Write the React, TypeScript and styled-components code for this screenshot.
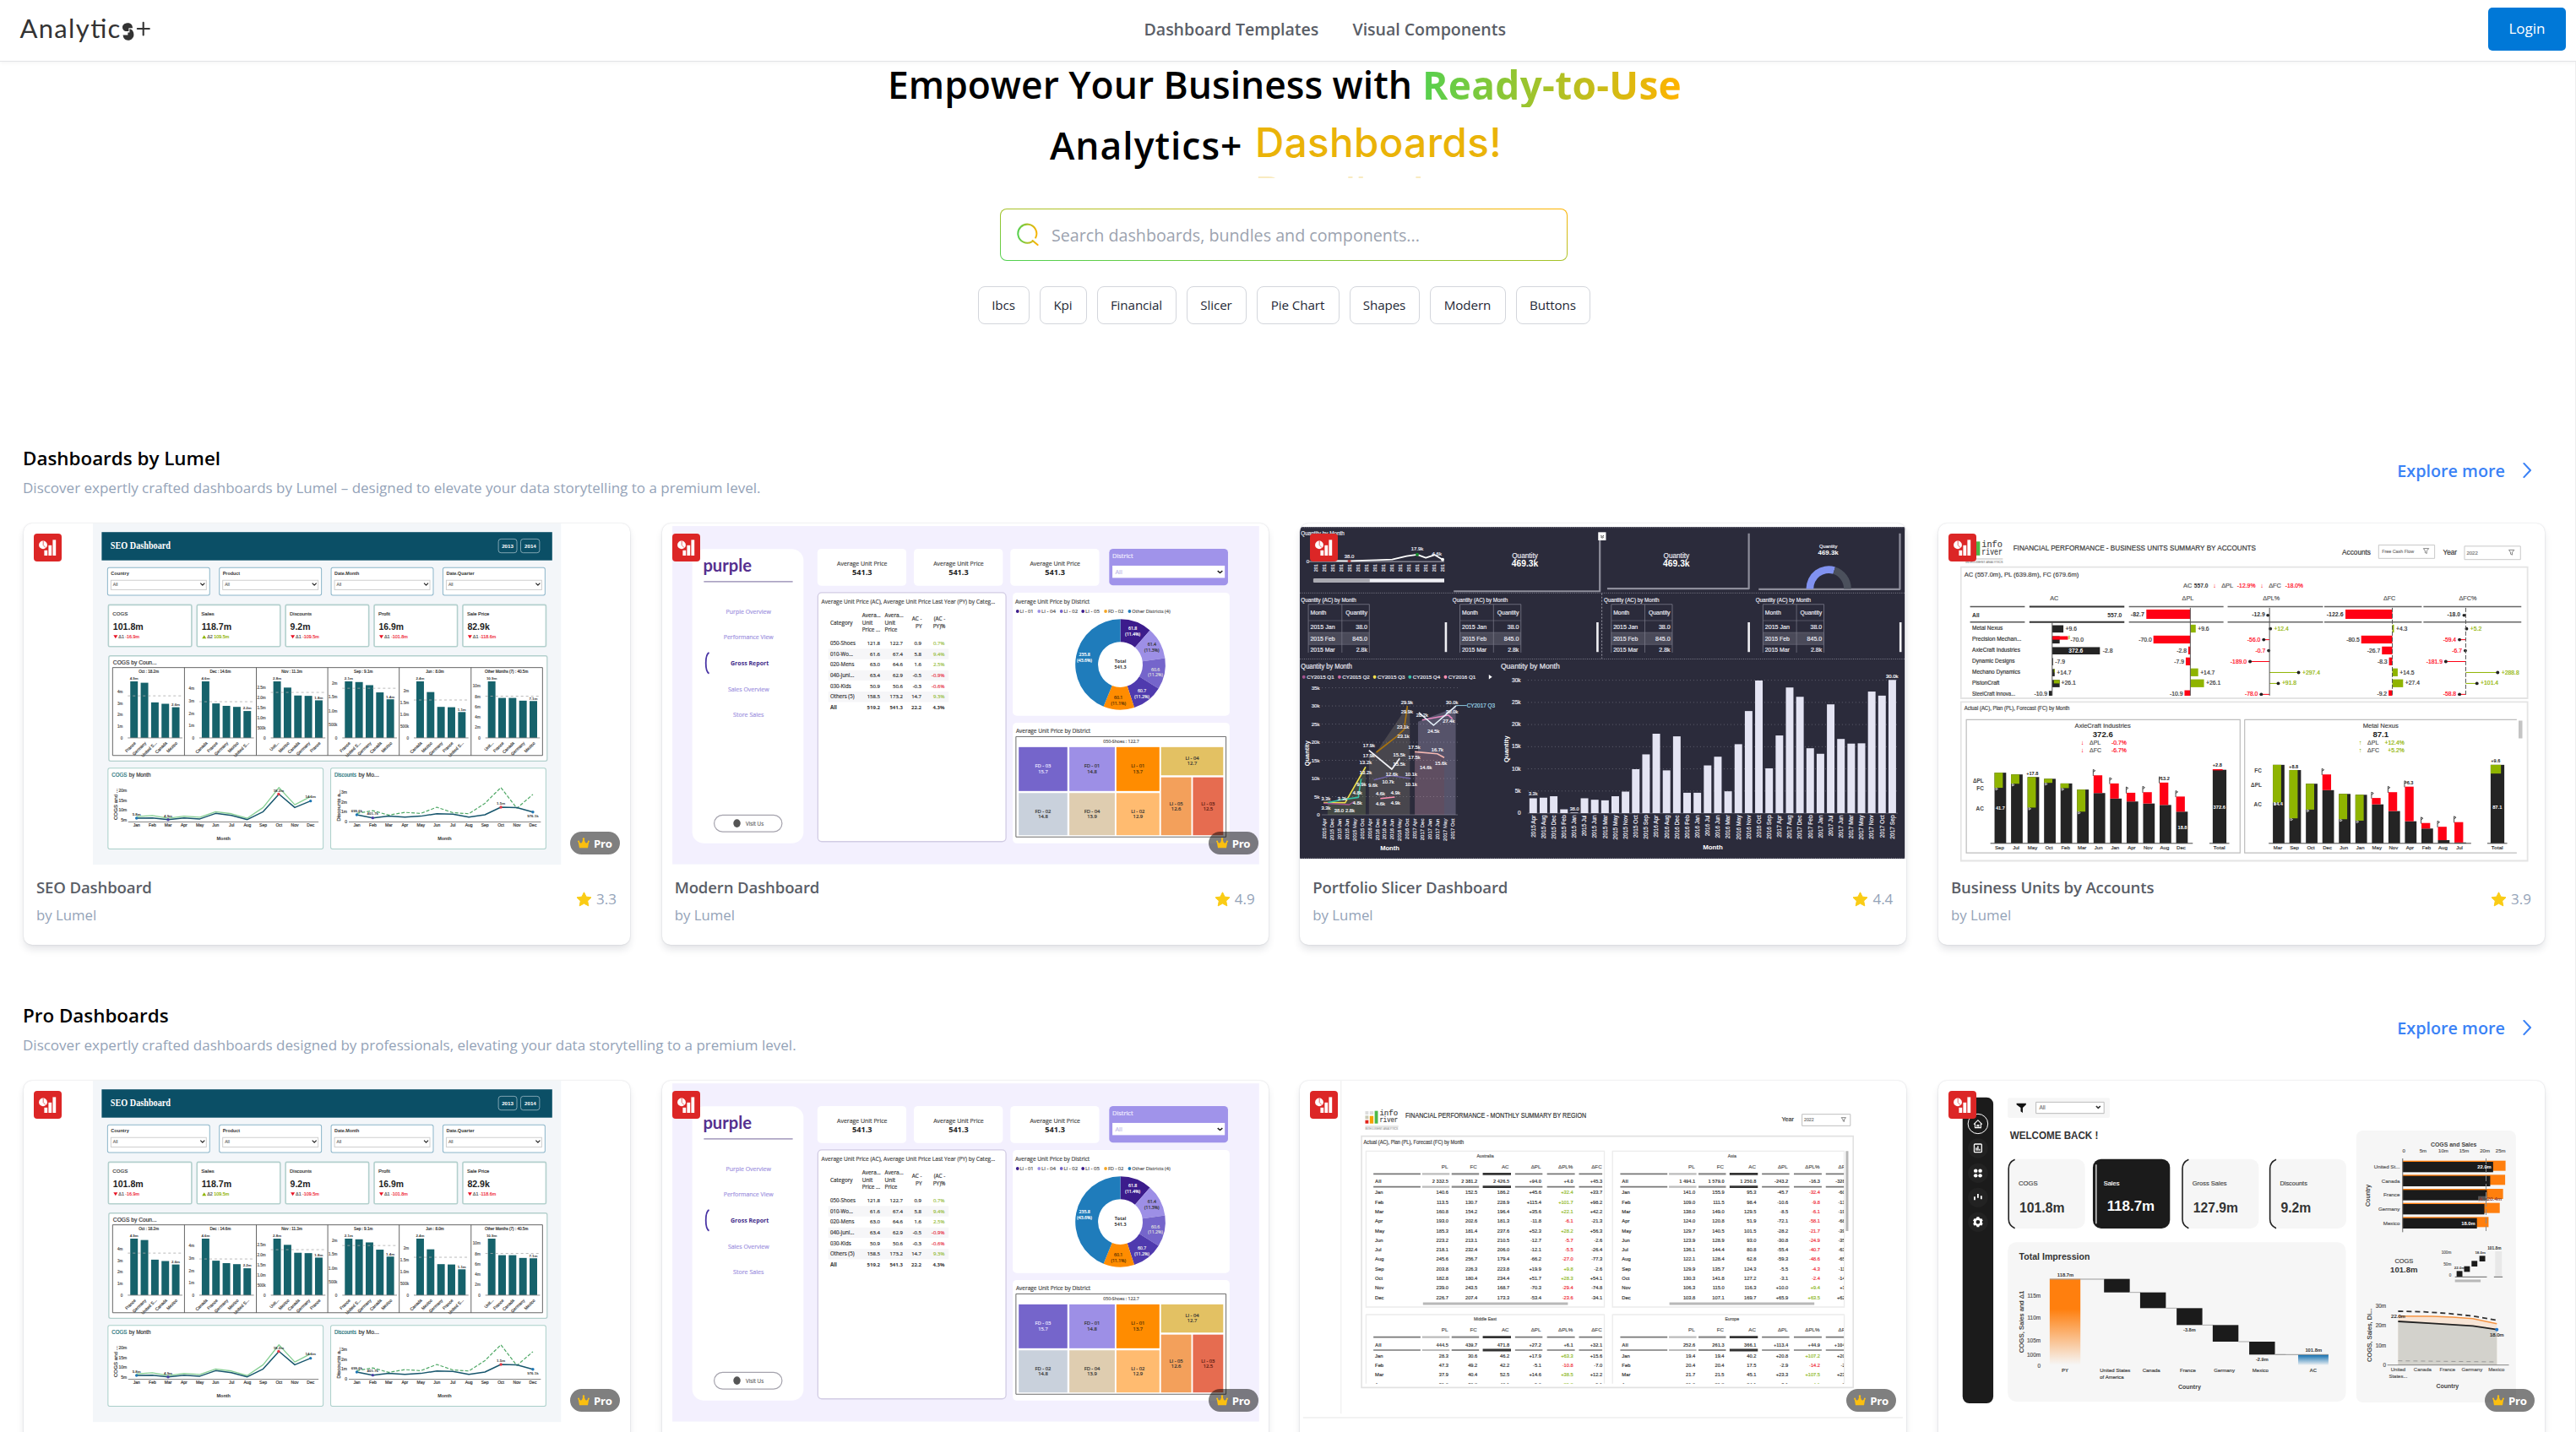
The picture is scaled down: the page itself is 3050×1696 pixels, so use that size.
import React, { createContext, useContext } from 'react';
import styled, { createGlobalStyle } from 'styled-components';

const ui = `'Open Sans', 'Noto Sans', sans-serif`;

const GlobalStyle = createGlobalStyle`
  *, *::before, *::after { box-sizing: border-box; }
  html, body { margin: 0; padding: 0; background: #fff; }
  body { font-family: ${ui}; overflow: hidden; }
  h1, h2, h3, p { margin: 0; }
`;

/* ---------- page shell ---------- */

const Page = styled.div`
  width: 3050px;
  height: 1696px;
  overflow: hidden;
  display: flex;
  flex-direction: column;
  background: #fff;
`;

const Header = styled.header`
  flex: none;
  height: 73px;
  display: grid;
  grid-template-columns: 1fr auto 1fr;
  align-items: center;
  padding: 0 12px 3px 24px;
  border-bottom: 1px solid #e2e3e6;
  background: #fff;
  box-shadow: 0 2px 4px rgba(0, 0, 0, 0.04);
`;

const Logo = styled.svg`
  display: block;
  width: 156px;
  height: 40px;
  margin-top: 3px;
  overflow: visible;
`;

const Nav = styled.nav`
  display: flex;
  gap: 42px;
  transform: translateX(39px);
`;

const NavLink = styled.a<{ $w: number }>`
  width: ${(p) => p.$w}px;
  white-space: nowrap;
  font-size: 19.6px;
  line-height: 28px;
  font-weight: 600;
  letter-spacing: -0.05px;
  color: #5a5e67;
`;

const LoginButton = styled.button`
  justify-self: end;
  width: 92px;
  height: 51px;
  border: 0;
  border-radius: 5px;
  background: #0078d7;
  color: #fff;
  font: 400 17px/24px ${ui};
  padding: 0 0 2px;
`;

const Scroll = styled.main`
  flex: 1;
  min-height: 0;
  padding-right: 9px;
  border-right: 1px solid #ededee;
`;

const Hero = styled.section`
  display: flex;
  flex-direction: column;
  align-items: center;
`;

const Headline = styled.h1`
  font-weight: 600;
  font-size: 44.4px;
  color: #000;
  display: flex;
  flex-direction: column;
  align-items: center;
  gap: 12px;
`;

const HeadRow = styled.span`
  display: flex;
  align-items: flex-start;
  white-space: nowrap;
`;

const Strong = styled.span`
  width: 305px;
  font-weight: 700;
  font-size: 46px;
  line-height: 54px;
  margin-left: 14px;
  background: linear-gradient(90deg, #56d04e, #ffb300);
  background-clip: text;
  -webkit-background-clip: text;
  color: transparent;
  letter-spacing: 0.3px;
`;

const HeadText = styled.span<{ $w: number; $drop?: number; $ls?: number }>`
  width: ${(p) => p.$w}px;
  line-height: 54px;
  letter-spacing: ${(p) => p.$ls ?? 0}px;
  padding-top: ${(p) => p.$drop ?? 0}px;
`;

const Rotator = styled.span`
  display: flex;
  flex-direction: column;
  width: 312px;
  height: 72px;
  padding: 1px 0 0 1px;
  overflow: hidden;
`;

const RotatingWord = styled.span<{ $faded?: boolean }>`
  flex: none;
  font: 500 47.5px/58px Inter, Roboto, sans-serif;
  letter-spacing: 0.4px;
  color: #eab308;
  opacity: ${(p) => (p.$faded ? 0.25 : 1)};
`;

const SearchBox = styled.label`
  margin-top: 36px;
  width: 672px;
  height: 62px;
  display: flex;
  padding: 1px;
  border-radius: 8px;
  background: linear-gradient(to top right, #4fd150, #ffb300);
`;

const SearchField = styled.span`
  flex: 1;
  display: flex;
  align-items: center;
  gap: 14px;
  padding-left: 18px;
  border-radius: 7px;
  background: #fff;
`;

const SearchInput = styled.input`
  flex: 1;
  border: 0;
  outline: 0;
  padding: 1px 0 0;
  background: transparent;
  font: 400 19.7px/28px ${ui};
  color: #374151;
  &::placeholder { color: #9ca3af; opacity: 1; }
`;

const Chips = styled.div`
  display: flex;
  gap: 12px;
  margin-top: 30px;
`;

const Chip = styled.button<{ $w: number }>`
  width: ${(p) => p.$w}px;
  height: 45px;
  padding: 0 0 1px;
  border: 1px solid #d3d6dc;
  border-radius: 8px;
  background: #fff;
  font: 400 15.2px/22px ${ui};
  letter-spacing: -0.1px;
  color: #1f2937;
  white-space: nowrap;
`;

/* ---------- sections & cards ---------- */

const Section = styled.section<{ $top: number }>`
  margin-top: ${(p) => p.$top}px;
  padding: 0 27px 0 28px;
`;

const SectionHead = styled.div`
  display: flex;
  justify-content: space-between;
  align-items: center;
  height: 94px;
  padding: 0 14px 30px 0;
`;

const Titles = styled.div`
  display: flex;
  flex-direction: column;
  gap: 6px;
  margin: 1px 0 0 -1px;
`;

const SectionTitle = styled.h2`
  font-size: 22.4px;
  line-height: 32px;
  font-weight: 600;
  letter-spacing: 0;
  color: #000;
`;

const SectionSub = styled.p`
  font-size: 17px;
  line-height: 26px;
  color: #94a3b8;
  white-space: nowrap;
`;

const Explore = styled.a`
  display: flex;
  align-items: center;
  gap: 19px;
  font-size: 19.8px;
  line-height: 28px;
  font-weight: 600;
  color: #3b82f6;
  white-space: nowrap;
`;

const Grid = styled.div`
  display: grid;
  grid-template-columns: repeat(4, 718px);
  justify-content: space-between;
`;

const CardBox = styled.article`
  height: 499px;
  border-radius: 10px;
  background: #fff;
  box-shadow: 0 0 2px rgba(30, 41, 59, 0.2), 0 6px 10px -1px rgba(30, 41, 59, 0.13);
`;

const Thumb = styled.div`
  position: relative;
  height: 405px;
  overflow: hidden;
  border-radius: 10px 10px 0 0;
`;

const Badge = styled.span`
  position: absolute;
  left: 12px;
  top: 12px;
  width: 33px;
  height: 33px;
  border-radius: 4px;
  background: #dc2626;
  svg { display: block; }
`;

const ProPill = styled.span`
  position: absolute;
  right: 12px;
  bottom: 13px;
  width: 59px;
  height: 27px;
  border-radius: 14px;
  background: rgba(0, 0, 0, 0.5);
  display: flex;
  align-items: center;
  gap: 5px;
  padding-left: 9px;
  font-weight: 700;
  font-size: 13.2px;
  line-height: 20px;
  letter-spacing: -0.3px;
  color: #fff;
`;

const Meta = styled.div`
  display: flex;
  justify-content: space-between;
  padding: 12px 16px 0 15px;
`;

const CardTitle = styled.h3`
  font-size: 18.6px;
  line-height: 28px;
  font-weight: 600;
  letter-spacing: -0.15px;
  color: #5a5e67;
  white-space: nowrap;
`;

const Author = styled.p`
  margin-top: 6px;
  font-size: 16.8px;
  line-height: 26px;
  color: #94a3b8;
`;

const Rating = styled.div`
  display: flex;
  align-items: center;
  gap: 5px;
  height: 26px;
  margin-top: 15px;
  font-size: 17px;
  line-height: 26px;
  color: #94a3b8;
`;

/* ---------- drawing helpers for the dashboard previews ---------- */

const PlateSvg = styled.svg`
  display: block;
  width: 718px;
  height: 405px;
  rect, path, line, polyline, ellipse { vector-effect: non-scaling-stroke; }
`;

const Scale = createContext<[number, number]>([1, 1]);
type Box = [number, number, number, number];

function Plate({ box, children }: { box: Box; children: React.ReactNode }) {
  return (
    <Scale.Provider value={[box[2] / 718, box[3] / 405]}>
      <PlateSvg viewBox={box.join(' ')} preserveAspectRatio="none">
        {children}
      </PlateSvg>
    </Scale.Provider>
  );
}

type LProps = {
  x: number; y: number; s?: number; w?: number; a?: 'start' | 'middle' | 'end';
  c?: string; b?: boolean; r?: number; f?: string; children: React.ReactNode;
};

/* Text label that keeps its proportions inside a stretched plate. `w` is a width in plate units. */
function L({ x, y, s = 6, w, a = 'start', c = '#333', b, r = 0, f, children }: LProps) {
  const [sx, sy] = useContext(Scale);
  return (
    <text
      transform={`translate(${x} ${y}) scale(${sx} ${sy}) rotate(${r})`}
      fontSize={s}
      fontFamily={f ?? "'Liberation Sans', Arial, sans-serif"}
      fontWeight={b ? 700 : 400}
      fill={c}
      stroke={c}
      strokeWidth={b ? 0 : 0.18}
      textAnchor={a}
      {...(w ? { textLength: w / sx, lengthAdjust: 'spacingAndGlyphs' as const } : {})}
    >
      {children}
    </text>
  );
}

type RProps = { x: number; y: number; X: number; Y: number; f?: string; st?: string; sw?: number; rx?: number; ry?: number };
const R = ({ x, y, X, Y, f = 'none', st, sw = 1, rx, ry }: RProps) => (
  <rect x={x} y={y} width={X - x} height={Y - y} fill={f} stroke={st} strokeWidth={sw} rx={rx} ry={ry ?? (rx ? rx * 1.3 : undefined)} />
);

type HProps = { x: number; y: number; X: number; Y?: number; c?: string; sw?: number; d?: string };
const H = ({ x, y, X, Y = y, c = '#555', sw = 1, d }: HProps) => (
  <line x1={x} y1={y} x2={X} y2={Y} stroke={c} strokeWidth={sw} strokeDasharray={d} />
);

const P = ({ pts, c, sw = 1, d, f = 'none' }: { pts: number[]; c?: string; sw?: number; d?: string; f?: string }) => (
  <polyline points={pts.join(' ')} fill={f} stroke={c} strokeWidth={sw} strokeDasharray={d} strokeLinejoin="round" />
);

const zip = (x0: number, dx: number, ys: number[]) => ys.flatMap((y, i) => [x0 + dx * i, y]);

function ring(cx: number, cy: number, R1: [number, number], R0: [number, number], a0: number, a1: number) {
  const pt = (r: [number, number], a: number) => {
    const t = (a * Math.PI) / 180;
    return `${cx + r[0] * Math.sin(t)} ${cy - r[1] * Math.cos(t)}`;
  };
  const big = a1 - a0 > 180 ? 1 : 0;
  return `M${pt(R1, a0)}A${R1[0]} ${R1[1]} 0 ${big} 1 ${pt(R1, a1)}L${pt(R0, a1)}A${R0[0]} ${R0[1]} 0 ${big} 0 ${pt(R0, a0)}Z`;
}

const MONTHS = ['Jan', 'Feb', 'Mar', 'Apr', 'May', 'Jun', 'Jul', 'Aug', 'Sep', 'Oct', 'Nov', 'Dec'];

/* ---------- SEO dashboard ---------- */

const seoPanels = [
  { h: 'Oct : 18.2m', t: [752, 756, 813, 817, 827], d: 794, v: ['4.9m', '2.6m'], ax: [['4m', 782], ['3m', 816], ['2m', 849], ['1m', 883]], n: ['France', 'Germany', 'United S...', 'Canada', 'Mexico'] },
  { h: 'Dec : 14.6m', t: [752, 816, 823, 826, 838], d: 811, v: ['4.6m', '2.2m'], ax: [['4m', 773], ['3m', 809], ['2m', 845], ['1m', 881]], n: ['Canada', 'France', 'Germany', 'Mexico', 'United S...'] },
  { h: 'Nov : 11.3m', t: [752, 770, 793, 794, 807], d: 784, v: ['2.8m', '1.8m'], ax: [['2.5m', 770], ['2.0m', 800], ['1.5m', 829], ['1.0m', 858], ['500k', 888]], n: ['Unit...', 'Mexico', 'Canada', 'Germany', 'France'] },
  { h: 'Sep : 9.1m', t: [752, 754, 763, 784, 804], d: 772, v: ['2.1m', '1.4m'], ax: [['2m', 758], ['1.5m', 798], ['1.0m', 838], ['500k', 877]], n: ['France', 'United S...', 'Germany', 'Canada', 'Mexico'] },
  { h: 'Jun : 8.0m', t: [752, 783, 826, 827, 841], d: 806, v: ['2.4m', '1.1m'], ax: [['2m', 780], ['1.5m', 814], ['1.0m', 848], ['500k', 882]], n: ['Canada', 'Mexico', 'Germany', 'France', 'United S...'] },
  { h: 'Other Months (7) : 40.5m', t: [752, 800, 800, 808, 809], d: 795, v: ['10.9m', '7.1m'], ax: [['10m', 766], ['8m', 797], ['6m', 827], ['4m', 857], ['2m', 886]], n: ['Unit...', 'France', 'Canada', 'Germany', 'Mexico'] },
] as const;

const seoKpis = [
  ['COGS', '101.8m', 'Δ1', '-16.9m'],
  ['Sales', '118.7m', 'Δ2', '109.5m'],
  ['Discounts', '9.2m', 'Δ1', '-109.5m'],
  ['Profit', '16.9m', 'Δ1', '-101.8m'],
  ['Sale Price', '82.9k', 'Δ1', '-118.6m'],
];

function SeoPlate() {
  return (
    <Plate box={[56.3, 294, 1443, 992]}>
      <R x={221} y={294} X={1335} Y={1284} f="#f3f6f9" />
      <R x={242} y={319} X={1314} Y={401} f="#0b4f66" />
      <L x={263} y={368} s={11.6} w={143} c="#fff" b f="'Liberation Serif', serif">SEO Dashboard</L>
      {['2013', '2014'].map((t, i) => (
        <g key={t}>
          <R x={1186 + i * 53} y={339} X={1230 + i * 54} Y={379} st="#9dbac5" rx={6} sw={0.8} />
          <L x={1208 + i * 54} y={365} s={6.2} a="middle" c="#fff" b>{t}</L>
        </g>
      ))}
      {['Country', 'Product', 'Date.Month', 'Date.Quarter'].map((t, i) => {
        const x = 256 + i * 266;
        return (
          <g key={t}>
            <R x={x} y={422} X={x + 243} Y={502} f="#fff" st="#8bb5c9" rx={4} />
            <L x={x + 8} y={444} s={5.9} w={[43, 41, 59, 67][i]} b>{t}</L>
            <R x={x + 8} y={459} X={x + 235} Y={486} f="#fff" st="#cfcfcf" />
            <L x={x + 13} y={475} s={5} c="#777">All</L>
            <P pts={[x + 221, 467, x + 226, 473, x + 231, 467]} c="#222" sw={1.2} />
          </g>
        );
      })}
      {seoKpis.map(([n, v, d, dv], i) => {
        const x = 258 + i * 210.8;
        const up = i === 1;
        return (
          <g key={n}>
            <R x={x} y={530} X={x + 198} Y={651} f="#fff" st="#b3d0cd" sw={1.6} rx={3} />
            <L x={x + 10} y={561} s={6.2} w={[36, 31, 52, 28, 53][i]}>{n}</L>
            <L x={x + 11} y={602} s={10.6} w={[72, 71, 48, 59, 53][i]} b c="#222">{v}</L>
            <path d={up ? `M${x + 12} 628l5 -10l5 10z` : `M${x + 12} 618l5 10l5 -10z`} fill={up ? '#8fb400' : '#e81123'} />
            <L x={x + 24} y={628} s={5.4} c="#555">{d}</L>
            <L x={x + 40} y={628} s={5.4} c={up ? '#8fb400' : '#f02b3b'}>{dv}</L>
          </g>
        );
      })}
      <R x={259} y={678} X={1302} Y={983} f="#fff" st="#b3d0cd" sw={1.3} rx={4} />
      <L x={269} y={703} s={6.8} w={104}>COGS by Coun...</L>
      <R x={268} y={712} X={1291} Y={967} st="#555" sw={0.9} />
      {[439, 610, 780, 950, 1121].map((x) => <H key={x} x={x} y={712} X={x} Y={967} sw={0.9} />)}
      {seoPanels.map((p, k) => {
        const x0 = 310 + k * 170.2;
        return (
          <g key={p.h}>
            <L x={x0 + 44} y={727} s={4.6} a="middle">{p.h}</L>
            {p.ax.map(([t, y]) => <L key={t} x={x0 - 18} y={y + 4} s={4.6} a="end" c="#555">{t}</L>)}
            <L x={x0 - 18} y={921} s={4.6} a="end" c="#555">0</L>
            {p.t.map((y, i) => (
              <g key={i}>
                <R x={x0 + i * 24.8} y={y} X={x0 + i * 24.8 + 18} Y={916} f="#16626b" />
                <L x={x0 + i * 24.8 + 14} y={932} s={5} a="end" r={-45} c="#444">{p.n[i]}</L>
              </g>
            ))}
            <H x={x0 - 6} y={p.d} X={x0 + 126} c="#aaa" d="3 3" sw={0.8} />
            <H x={x0 - 6} y={916} X={x0 + 124} c="#777" sw={0.8} />
            <L x={x0 + 9} y={747} s={4.4} a="middle" b>{p.v[0]}</L>
            <L x={x0 + 108} y={p.t[4] - 4} s={4.4} a="middle" b>{p.v[1]}</L>
          </g>
        );
      })}
      {[257, 787].map((x) => <R key={x} x={x} y={1004} X={x + 512} Y={1238} f="#fff" st="#a9cfc9" rx={4} />)}
      <L x={266} y={1029} s={6.4} w={36} c="#146c74">COGS</L>
      <L x={307} y={1029} s={6.4} w={52}>by Month</L>
      <L x={796} y={1029} s={6.4} w={52} c="#146c74">Discounts</L>
      <L x={853} y={1029} s={6.4} w={49}>by Mo...</L>
      <L x={280} y={1154} s={6.2} r={-90}>COGS and ...</L>
      <L x={809} y={1158} s={6.2} r={-90}>Discounts a...</L>
      {[['20m', 1074], ['15m', 1102], ['10m', 1130], ['5m', 1158]].map(([t, y]) => <L key={t} x={302} y={y as number} s={5} a="end" c="#444">{t}</L>)}
      {[['3m', 1077], ['2m', 1106], ['1m', 1135], ['0', 1163]].map(([t, y]) => <L key={t} x={826} y={y as number} s={5} a="end" c="#444">{t}</L>)}
      <H x={305} y={1160} X={758} c="#888" />
      <H x={830} y={1160} X={1287} c="#888" />
      {MONTHS.map((m, i) => (
        <g key={m}>
          <L x={325 + i * 37.65} y={1173} s={5} a="middle">{m}</L>
          <L x={849 + i * 38.1} y={1173} s={5} a="middle">{m}</L>
        </g>
      ))}
      <L x={532} y={1212} s={6} w={33} a="middle" b>Month</L>
      <L x={1058} y={1212} s={6} w={33} a="middle" b>Month</L>
      <P pts={zip(325, 37.65, [1144, 1141, 1149, 1143, 1146, 1130, 1136, 1149, 1118, 1060, 1110, 1086])} c="#86cf92" sw={1.3} />
      <P pts={zip(325, 37.65, [1149, 1148, 1153, 1148, 1151, 1135, 1141, 1153, 1130, 1079, 1118, 1099])} c="#17566d" sw={1.5} />
      <P pts={zip(849, 38.1, [1135, 1127, 1140, 1132, 1135, 1117, 1133, 1136, 1106, 1060, 1120, 1080])} c="#4fa866" sw={1.2} d="4 2" />
      <P pts={zip(849, 38.1, [1139, 1148, 1143, 1146, 1143, 1136, 1137, 1146, 1139, 1117, 1118, 1131])} c="#17566d" sw={1.5} />
      {([[325, 1149, '#1f77b4'], [400, 1153, '#4b3fa7'], [663, 1079, '#e63946'], [739, 1099, '#1f77b4'], [849, 1139, '#1f77b4'], [887, 1148, '#4b3fa7'], [1192, 1117, '#e63946'], [1268, 1131, '#1f77b4']] as const).map(([x, y, c]) => (
        <ellipse key={x} cx={x} cy={y} rx={3.4} ry={4.2} fill={c} />
      ))}
      {([[325, 1141, '5.8m'], [400, 1146, '4.9m'], [663, 1072, '18.2m'], [739, 1091, '14.6m'], [849, 1131, '699.6k'], [887, 1139, '401.7k'], [1192, 1109, '1.5m'], [1268, 1147, '976.1k']] as const).map(([x, y, t]) => (
        <L key={x} x={x} y={y} s={4.4} a="middle" b>{t}</L>
      ))}
    </Plate>
  );
}

/* ---------- Modern (purple) dashboard ---------- */

const segoe = "'Open Sans', sans-serif";

function ModernPlate() {
  const slices: [number, number, string][] = [
    [0, 41, '#3c1c8c'], [41, 82, '#9d8fe6'], [82, 122, '#7565cb'], [122, 162, '#4f3aae'], [162, 202, '#ff8c00'], [202, 360, '#1f7cbb'],
  ];
  const rows: [string, string, string, string, string][] = [
    ['050-Shoes', '121.8', '122.7', '0.9', '0.7%'],
    ['010-Wo...', '61.6', '67.4', '5.8', '9.4%'],
    ['020-Mens', '63.0', '64.6', '1.6', '2.5%'],
    ['040-Juni...', '63.4', '62.9', '-0.5', '-0.9%'],
    ['030-Kids', '50.9', '50.6', '-0.3', '-0.6%'],
    ['Others (5)', '158.5', '173.2', '14.7', '9.3%'],
    ['All', '519.2', '541.3', '22.2', '4.3%'],
  ];
  const tree: [number, number, number, number, string, string, string, string][] = [
    [902, 827, 1024, 978, '#7565cb', 'FD - 03', '15.7', '#e7e3ff'],
    [1029, 827, 1143, 978, '#9d8fe6', 'FD - 01', '14.8', '#333'],
    [1147, 827, 1255, 978, '#ff8c00', 'LI - 01', '13.7', '#553300'],
    [1259, 827, 1415, 924, '#e3c163', 'LI - 04', '12.7', '#333'],
    [902, 985, 1024, 1130, '#c9d1dc', 'FD - 02', '14.8', '#333'],
    [1029, 985, 1143, 1130, '#dfcdb0', 'FD - 04', '13.9', '#333'],
    [1147, 985, 1255, 1130, '#ffbb70', 'LI - 02', '12.9', '#333'],
    [1259, 931, 1335, 1130, '#f3a05b', 'LI - 05', '12.6', '#333'],
    [1339, 931, 1415, 1130, '#e66c50', 'LI - 03', '12.5', '#5c1a10'],
  ];
  return (
    <Plate box={[7.4, 58, 1521.4, 1176]}>
      <R x={33} y={67} X={1505} Y={1230} f="#f3f0fe" />
      <R x={83} y={146} X={362} Y={1158} f="#fff" rx={30} ry={38} />
      <L x={110} y={223} s={20} w={122} b c="#56308f" f="Lato, sans-serif">purple</L>
      <H x={112} y={258} X={335} c="#8f83ae" sw={1.4} />
      {['Purple Overview', 'Performance View', 'Gross Report', 'Sales Overview', 'Store Sales'].map((t, i) => (
        <L key={t} x={i === 2 ? 227 : 224} y={368 + i * 89} s={7.2} w={[113, 125, 96, 103, 77][i]} a="middle" b={i === 2} c={i === 2 ? '#3f2b8a' : '#a294df'} f={segoe}>{t}</L>
      ))}
      <path d="M125 502Q117 508 117 538T125 574" stroke="#4a35a5" strokeWidth={1.8} fill="none" />
      <R x={138} y={1061} X={308} Y={1118} f="#fff" st="#a5a3ad" sw={1.2} rx={21} ry={28} />
      <ellipse cx={195} cy={1089} rx={9} ry={14} fill="#555" />
      <L x={217} y={1098} s={7} w={45} c="#666" f={segoe}>Visit Us</L>
      {[397, 639, 881].map((x) => (
        <g key={x}>
          <R x={x} y={145} X={x + 223} Y={272} f="#fff" rx={10} />
          <L x={x + 112} y={202} s={7.8} w={126} a="middle" c="#444" f={segoe}>Average Unit Price</L>
          <L x={x + 112} y={235} s={9.4} w={50} a="middle" b c="#222" f={segoe}>541.3</L>
        </g>
      ))}
      <R x={1129} y={145} X={1427} Y={271} f="#a093ea" rx={10} />
      <L x={1137} y={178} s={7.4} c="#f0edff" f={segoe}>District</L>
      <R x={1137} y={203} X={1419} Y={245} f="#fff" />
      <L x={1144} y={232} s={7.4} c="#c2bbe8" f={segoe}>All</L>
      <P pts={[1401, 221, 1407, 228, 1413, 221]} c="#222" sw={1.5} />
      <R x={398} y={296} X={870} Y={1152} f="#fff" st="#d2cce4" sw={1.3} rx={10} />
      <L x={407} y={333} s={7.4} w={436} c="#444" f={segoe}>Average Unit Price (AC), Average Unit Price Last Year (PY) by Categ...</L>
      <L x={429} y={406} s={6.4} f={segoe}>Category</L>
      {['Avera...', 'Unit', 'Price ...'].map((t, i) => <L key={t} x={509} y={381 + i * 25} s={6.4} f={segoe}>{t}</L>)}
      {['Avera...', 'Unit', 'Price'].map((t, i) => <L key={t} x={566} y={381 + i * 25} s={6.4} f={segoe}>{t}</L>)}
      <L x={659} y={393} s={6.4} a="end" f={segoe}>AC -</L><L x={659} y={418} s={6.4} a="end" f={segoe}>PY</L>
      <L x={718} y={393} s={6.4} a="end" f={segoe}>(AC -</L><L x={718} y={418} s={6.4} a="end" f={segoe}>PY)%</L>
      {rows.map((r, i) => {
        const y = 476 + i * 36.8;
        const last = i === 6;
        const pc = last ? '#333' : r[4][0] === '-' ? '#e8384c' : '#9cc24a';
        return (
          <g key={r[0]}>
            {i % 2 === 1 && <R x={424} y={y - 24} X={726} Y={y + 12} f="#f6f6f8" />}
            <L x={429} y={y} s={6.2} b={last} f={segoe}>{r[0]}</L>
            {[554, 611, 658].map((x, k) => <L key={x} x={x} y={y} s={6} a="end" b={last} f={segoe}>{r[k + 1]}</L>)}
            <L x={716} y={y} s={6} a="end" b={last} c={pc} f={segoe}>{r[4]}</L>
          </g>
        );
      })}
      <R x={887} y={296} X={1431} Y={719} f="#fff" rx={10} />
      <L x={893} y={333} s={7.4} w={187} c="#444" f={segoe}>Average Unit Price by District</L>
      {([[895, 'LI - 01', '#3c1c8c', 34], [949, 'LI - 04', '#9d8fe6', 36], [1005, 'LI - 02', '#7565cb', 35], [1059, 'LI - 05', '#3c1c8c', 36], [1116, 'FD - 02', '#f5a623', 39], [1176, 'Other Districts (4)', '#1f7cbb', 96]] as const).map(([x, t, c, w]) => (
        <g key={t}>
          <ellipse cx={x + 4} cy={360} rx={4} ry={5.5} fill={c} />
          <L x={x + 10} y={367} s={6} w={w} c="#555" f={segoe}>{t}</L>
        </g>
      ))}
      {slices.map(([a, b, c]) => <path key={a} d={ring(1157, 543, [113, 156], [56, 78], a, b)} fill={c} />)}
      {([[1188, 424, '61.8', '(11.4%)', '#fff'], [1236, 480, '61.4', '(11.3%)', '#333'], [1245, 566, '60.6', '(11.2%)', '#ddd'], [1211, 639, '60.7', '(11.2%)', '#eee'], [1152, 662, '60.1', '(11.1%)', '#5c3300'], [1067, 514, '235.8', '(43.6%)', '#fff']] as const).map(([x, y, p, q, c]) => (
        <g key={x}>
          <L x={x} y={y} s={5.2} a="middle" c={c} f={segoe}>{p}</L>
          <L x={x} y={y + 19} s={5.2} a="middle" c={c} f={segoe}>{q}</L>
        </g>
      ))}
      <L x={1157} y={537} s={5.4} a="middle" b f={segoe}>Total</L>
      <L x={1157} y={556} s={5.4} a="middle" b f={segoe}>541.3</L>
      <R x={887} y={743} X={1431} Y={1158} f="#fff" rx={10} />
      <L x={895} y={779} s={7.4} w={187} c="#444" f={segoe}>Average Unit Price by District</L>
      <R x={895} y={791} X={1422} Y={1136} f="#fff" st="#6b6b6b" sw={1} />
      <L x={1159} y={813} s={5.6} w={90} a="middle" c="#555" f={segoe}>050-Shoes : 122.7</L>
      {tree.map(([x, y, X, Y, c, n, v, tc]) => (
        <g key={n}>
          <R x={x} y={y} X={X} Y={Y} f={c} />
          <L x={(x + X) / 2} y={(y + Y) / 2 - 4} s={5.8} a="middle" c={tc} f={segoe}>{n}</L>
          <L x={(x + X) / 2} y={(y + Y) / 2 + 14} s={5.8} a="middle" c={tc} f={segoe}>{v}</L>
        </g>
      ))}
    </Plate>
  );
}

/* ---------- Portfolio slicer dashboard ---------- */

const sorted = ['Apr', 'Aug', 'Dec', 'Feb', 'Jan', 'Jul', 'Jun', 'Mar', 'May', 'Nov', 'Oct', 'Sep'];
const slicerMonths = ['2015', '2016', '2017'].flatMap((y) => sorted.map((m) => `${y} ${m}`));
const slicerTops = [1003, 1001, 996, 1041, 1052, 1003, 1008, 1010, 996, 980, 903, 852, 781, 907, 790, 984, 984, 890, 860, 979, 817, 703, 598, 900, 787, 622, 654, 831, 850, 680, 799, 815, 814, 636, 650, 596];

function PortfolioPlate() {
  const W = '#e9e9f2';
  const left = ['2015 Apr', '2015 Dec', '2015 Jan', '2015 Jun', '2015 May', '2015 Oct', '2016 Apr', '2016 Dec', '2016 Jan', '2016 Jun', '2016 May', '2016 Oct', '2017 Apr', '2017 Dec', '2017 Jan', '2017 Jun', '2017 May', '2017 Oct'];
  return (
    <Plate box={[39.2, 58, 1481.3, 1176]}>
      <R x={36} y={70} X={1517} Y={1211} f="#2b2b3b" />
      {[72, 297, 524, 1209].map((y) => <H key={y} x={39} y={y} X={1517} c="#9a9aa8" sw={0.8} d="1 1.5" />)}
      <L x={42} y={100} s={7.6} w={106} c={W}>Quantity by Month</L>
      <P pts={[100, 186, 160, 187, 225, 184, 265, 182, 300, 170, 326, 165, 347, 176, 369, 166, 388, 182]} c="#fff" sw={1.8} />
      <H x={62} y={189} X={392} c="#cfcfd8" sw={0.8} />
      <L x={55} y={195} s={6} c={W}>0</L>
      <L x={160} y={176} s={6} a="middle" c={W}>38.0</L>
      <L x={326} y={151} s={6} a="middle" c={W}>17.9k</L>
      <L x={374} y={169} s={6} a="middle" c={W}>4.6k</L>
      <ellipse cx={326} cy={165} rx={4} ry={6} fill="#168a2c" />
      <ellipse cx={160} cy={187} rx={4} ry={5} fill="#a33" />
      <ellipse cx={388} cy={182} rx={4} ry={6} fill="#fff" />
      {Array.from({ length: 16 }, (_, i) => <L key={i} x={82 + i * 20.7} y={224} s={5.4} r={-90} c={W}>201</L>)}
      <H x={74} y={254} X={392} c="#efeff4" sw={4.6} />
      <H x={72} y={254} X={210} c="#a9a9b0" sw={4.6} />
      {([[415, 92, 772, 291], [790, 92, 1136, 282], [1160, 92, 1505, 284]] as const).map(([x, y, X, Y]) => (
        <P key={x} pts={[x, Y, X, Y, X, y]} c="#8e8e9b" sw={2.2} />
      ))}
      <R x={768} y={88} X={787} Y={116} f="#fff" />
      <P pts={[774, 99, 778, 103, 782, 99]} c="#555" /><P pts={[774, 104, 778, 108, 782, 104]} c="#555" />
      {[589, 959].map((x) => (
        <g key={x}>
          <L x={x} y={176} s={8.2} w={63} a="middle" c={W}>Quantity</L>
          <L x={x} y={206} s={10} w={65} a="middle" b c="#fff">469.3k</L>
        </g>
      ))}
      <L x={1330} y={141} s={6} w={44} a="middle" c={W}>Quantity</L>
      <L x={1330} y={166} s={7.8} w={50} a="middle" b c="#fff">469.3k</L>
      <path d={ring(1331, 283, [55, 79], [37, 54], -90, 17)} fill="#8192f0" />
      <path d={ring(1331, 283, [55, 79], [37, 54], 17, 90)} fill="#4b505c" />
      <H x={777} y={298} X={777} Y={522} c="#b8b8c4" d="2 2" sw={0.8} />
      {[0, 370.3, 740, 1110.5].map((o) => (
        <g key={o} transform={`translate(${o} 0)`}>
          <L x={42} y={327} s={7} w={135} c={W}>Quantity (AC) by Month</L>
          <R x={60} y={433} X={209} Y={474} f="#4a4a59" />
          <P pts={[60, 502, 60, 336, 209, 336, 209, 502]} c="#7c7c8b" sw={0.8} />
          {[392, 433, 474].map((y) => <H key={y} x={60} y={y} X={209} c="#6a6a79" sw={0.7} />)}
          <H x={142} y={336} X={142} Y={502} c="#7c7c8b" sw={0.7} />
          <L x={65} y={371} s={7.2} w={39} c={W}>Month</L><L x={204} y={371} s={7.2} w={53} a="end" c={W}>Quantity</L>
          {([['2015 Jan', '38.0', 421], ['2015 Feb', '845.0', 461], ['2015 Mar', '2.8k', 500]] as const).map(([a, b, y]) => (
            <g key={a}><L x={65} y={y} s={7} w={60} c={W}>{a}</L><L x={204} y={y} s={7} a="end" c={W}>{b}</L></g>
          ))}
          <H x={396} y={398} X={396} Y={500} c="#f1f1f5" sw={2.6} />
        </g>
      ))}
      <L x={42} y={558} s={8.2} w={125} c={W}>Quantity by Month</L>
      <L x={530} y={558} s={8.6} w={144} c={W}>Quantity by Month</L>
      {([[45, 'CY2015 Q1', '#a3548f'], [132, 'CY2015 Q2', '#c9689c'], [218, 'CY2015 Q3', '#f4e04d'], [304, 'CY2015 Q4', '#35c2a6'], [391, 'CY2016 Q1', '#ff8fb1']] as const).map(([x, t, c]) => (
        <g key={t}><ellipse cx={x + 4} cy={586} rx={4} ry={6} fill={c} /><L x={x + 11} y={592} s={6.2} w={67} c={W}>{t}</L></g>
      ))}
      <path d="M501 578l8 8l-8 8z" fill="#fff" />
      {[35, 30, 25, 20, 15, 10, 5, 0].map((v, i) => (
        <g key={v}>
          <L x={88} y={629 + i * 62.4} s={6.2} a="end" c={W}>{v ? `${v}k` : '0'}</L>
          <H x={93} y={623 + i * 62.4} X={425} c="#6d6d7b" sw={0.8} d={v ? '1 3' : undefined} />
        </g>
      ))}
      <g opacity={0.3}>
        <P pts={[107, 1060, 107, 1018, 150, 1015, 200, 895, 200, 1060]} f="#7c8c5a" />
        <P pts={[208, 1060, 208, 850, 226, 845, 300, 690, 308, 700, 308, 1060]} f="#8d8579" />
        <P pts={[328, 1060, 328, 740, 420, 690, 420, 1060]} f="#b9b0d8" />
        <P pts={[320, 1060, 320, 845, 392, 860, 392, 1060]} f="#d8a0b8" />
      </g>
      <P pts={[97, 1018, 150, 1018, 200, 895]} c="#efe04a" sw={1.6} />
      <P pts={[107, 1018, 140, 1008, 182, 1000, 189, 936]} c="#35c2a6" sw={1.6} />
      <P pts={[97, 1020, 160, 1025, 172, 1014]} c="#a3548f" sw={1.4} />
      <P pts={[226, 845, 276, 790, 294, 766, 302, 685]} c="#a8720f" sw={1.7} />
      <P pts={[208, 838, 264, 903, 283, 866]} c="#f3f3f7" sw={1.7} />
      <P pts={[220, 940, 262, 925, 310, 935]} c="#6f63a8" sw={1.4} />
      <P pts={[236, 1004, 271, 999]} c="#ff8fb1" sw={1.4} />
      <P pts={[320, 843, 375, 850, 392, 863]} c="#f5b7b1" sw={1.6} />
      <P pts={[338, 734, 402, 717, 412, 730]} c="#e58ac0" sw={1.6} />
      <P pts={[330, 708, 366, 752, 421, 685]} c="#e6f2fb" sw={1.6} />
      <H x={421} y={684} X={447} c="#8fc7dc" />
      <L x={447} y={690} s={6.4} w={69} c="#9bd8e8">CY2017 Q3</L>
      {([[103, 1009, '3.3k'], [103, 1043, '3.3k'], [143, 1009, '3.3k'], [135, 1051, '38.0'], [162, 1050, '2.8k'], [180, 1024, '4.8k'], [180, 991, '4.8k'], [200, 887, '13.2k'], [200, 920, '13.2k'], [190, 961, '9.9k'], [218, 964, '9.6k'], [208, 828, '17.9k'], [208, 862, '17.9k'], [255, 951, '10.7k'], [264, 926, '12.6k'], [311, 925, '10.1k'], [311, 960, '10.1k'], [236, 993, '4.6k'], [236, 1028, '4.6k'], [273, 990, '4.9k'], [273, 1024, '4.9k'], [291, 763, '23.1k'], [292, 796, '23.1k'], [301, 678, '29.9k'], [301, 711, '29.9k'], [338, 724, '28.2k'], [366, 778, '24.5k'], [403, 742, '27.4k'], [411, 678, '30.0k'], [411, 711, '30.0k'], [319, 833, '17.5k'], [319, 867, '17.5k'], [375, 842, '16.7k'], [384, 889, '15.6k'], [347, 902, '14.6k'], [282, 858, '15.5k'], [282, 891, '15.5k']] as const).map(([x, y, t], i) => (
        <L key={i} x={x} y={y} s={5.8} a="middle" c="#f4f4f8">{t}</L>
      ))}
      {left.map((t, i) => <L key={t} x={103 + i * 18.45} y={1073} s={6} a="end" r={-90} c={W}>{t}</L>)}
      <L x={61} y={892} s={7.4} r={-90} c="#fff" b>Quantity</L>
      <L x={549} y={880} s={7.8} r={-90} c="#fff" b>Quantity</L>
      <L x={259} y={1181} s={7.6} a="middle" c="#fff" b>Month</L>
      <L x={1048} y={1178} s={7.9} a="middle" c="#fff" b>Month</L>
      {[30, 25, 20, 15, 10, 5, 0].map((v, i) => (
        <g key={v}>
          <L x={579} y={603 + i * 76.2} s={6.6} a="end" c={W}>{v ? `${v}k` : '0'}</L>
          <H x={596} y={597 + i * 76.2} X={1500} c="#6d6d7b" sw={0.8} d={v ? '1 3' : undefined} />
        </g>
      ))}
      {slicerTops.map((y, i) => (
        <g key={i}>
          <R x={600 + i * 25.06} y={y} X={618.5 + i * 25.06} Y={1054} f="#e4e4f3" />
          <L x={614 + i * 25.06} y={1061} s={6.6} a="end" r={-90} c={W}>{slicerMonths[i]}</L>
        </g>
      ))}
      <L x={609} y={994} s={5.6} a="middle" c={W}>3.3k</L>
      <L x={710} y={1045} s={5.6} a="middle" c={W}>38.0</L>
      <L x={1486} y={588} s={6} a="middle" c="#fff">30.0k</L>
    </Plate>
  );
}

/* ---------- Business units dashboard ---------- */

const RED = '#ff0014';
const GREEN = '#8fb400';

function MonthBars({ x0, bars, total }: { x0: number; bars: [string, number, number, 0 | 1, number?][]; total: [number, number, string] }) {
  return (
    <>
      {bars.map(([m, top, split, good], i) => {
        const x = x0 + i * 39.8;
        return (
          <g key={m}>
            <R x={x} y={good ? top : split} X={x + 28} Y={1158} f="#242424" />
            {top < split && <R x={x} y={top} X={x + (good ? 20 : 21)} Y={split} f={good ? GREEN : RED} />}
            <P pts={good ? [x + 3, split, x + 3, split + 8, x + 8, split + 4, x + 3, split] : [x - 1, top + 2, x - 1, top - 20, x + 4, top - 16, x - 1, top - 11]} c={good ? '#ccc' : '#333'} sw={0.9} />
            <L x={x + 12} y={1180} s={6} a="middle">{m}</L>
          </g>
        );
      })}
      <R x={x0 + total[0]} y={total[1]} X={x0 + total[0] + 33} Y={1158} f="#242424" />
      <L x={x0 + total[0] + 16} y={1040} s={5.8} a="middle" b c="#fff">{total[2]}</L>
      <L x={x0 + total[0] + 16} y={1180} s={6} a="middle" b>Total</L>
      <H x={x0 - 10} y={1158} X={x0 + 478} c="#444" />
      <H x={x0 + total[0] - 8} y={1158} X={x0 + total[0] + 40} c="#444" />
    </>
  );
}

function BusinessPlate() {
  const names = ['Metal Nexus', 'Precision Mechan...', 'AxleCraft Industries', 'Dynamic Designs', 'Mechano Dynamics', 'PistonCraft', 'SteelCraft Innova...'];
  const pl = [9.6, -70, -2.8, -7.9, 14.7, 26.1, -10.9];
  const plx = [650, 548, 632, 626, 656, 670, 623];
  const fc = [4.3, -80.5, -26.7, -8.3, 14.5, 27.4, -9.2];
  const fcx = [1128, 1049, 1099, 1116, 1137, 1150, 1115];
  const p1: [number, string][] = [[830, '+12.4'], [814, '-56.0'], [826, '-0.7'], [781, '-189.0'], [898, '+297.4'], [849, '+91.8'], [808, '-78.0']];
  const p2: [number, string][] = [[1303, '+5.2'], [1286, '-59.4'], [1300, '-6.7'], [1253, '-181.9'], [1378, '+288.8'], [1328, '+101.4'], [1286, '-58.8']];
  const sign = (n: number) => (n > 0 ? `+${n.toFixed(1)}` : n.toFixed(1));
  const lolli = (z: number, [x, t]: [number, string], y: number) => {
    const pos = t[0] === '+';
    const c = pos ? GREEN : RED;
    return (
      <g key={t}>
        <H x={z} y={y} X={x} c={c} />
        <ellipse cx={x} cy={y} rx={4} ry={5.6} fill="#222" />
        <L x={x + (pos ? 9 : -8)} y={y + 6} s={6.8} a={pos ? 'start' : 'end'} c={c}>{t}</L>
      </g>
    );
  };
  return (
    <Plate box={[29.5, 58, 1462, 1176]}>
      <R x={120} y={120} X={130} Y={168} f="#4db848" />
      <L x={134} y={139} s={10.2} w={50} c="#444" f="'Liberation Mono', monospace">info</L>
      <L x={134} y={165} s={10.2} w={50} c="#444" f="'Liberation Mono', monospace">river</L>
      <H x={95} y={180} X={185} c="#bbb" />
      <L x={95} y={194} s={3.6} w={90} c="#999">INTELLIGENT ANALYTICS</L>
      <L x={210} y={151} s={9.4} w={585} c="#333">FINANCIAL PERFORMANCE - BUSINESS UNITS SUMMARY BY ACCOUNTS</L>
      <L x={1003} y={165} s={8.6} w={69} c="#333">Accounts</L>
      <L x={1246} y={165} s={8.6} w={34} c="#333">Year</L>
      <R x={1091} y={132} X={1226} Y={178} f="#fff" st="#c9c9c9" />
      <L x={1099} y={161} s={6} w={77} c="#777">Free Cash Flow</L>
      <R x={1298} y={136} X={1433} Y={182} f="#fff" st="#c9c9c9" />
      <L x={1303} y={165} s={6} c="#777">2022</L>
      <path d="M1199 144h13l-5 8v9l-4 -3v-6zM1405 149h13l-5 8v9l-4 -3v-6z" fill="none" stroke="#777" strokeWidth={0.9} />
      <R x={84} y={208} X={1450} Y={659} st="#e4e4e4" sw={1.8} />
      <L x={92} y={241} s={8} w={276} c="#444">AC (557.0m), PL (639.8m), FC (679.6m)</L>
      <L x={620} y={279} s={7.4} c="#555">AC</L><L x={646} y={279} s={6.8} w={34} b>557.0</L>
      <L x={692} y={279} s={7.6} c={RED} b>↓</L><L x={712} y={279} s={7.4} c="#555">ΔPL</L><L x={750} y={279} s={7} w={44} c={RED}>-12.9%</L>
      <L x={806} y={279} s={7.6} c={RED} b>↓</L><L x={826} y={279} s={7.4} c="#555">ΔFC</L><L x={866} y={279} s={7} w={43} c={RED}>-18.0%</L>
      {([[309, 'AC'], [631, 'ΔPL'], [832, 'ΔPL%'], [1117, 'ΔFC'], [1306, 'ΔFC%']] as const).map(([x, t]) => <L key={t} x={x} y={323} s={7.2} a="middle" c="#555">{t}</L>)}
      {[344, 397].map((y) =>
        ([[106, 238, '#555', 1.6], [249, 478, '#333', 2.2], [489, 717, '#666', 1.6], [727, 957, '#666', 1.6], [960, 1195, '#666', 1.6], [1199, 1435, '#666', 1.6]] as const).map(([x, X, c, sw]) => <H key={x} x={x} y={y} X={X} c={c} sw={sw} />)
      )}
      <L x={111} y={379} s={6.8} b>All</L><L x={472} y={379} s={6.8} a="end" b>557.0</L>
      <L x={526} y={377} s={7} a="end" b>-82.7</L><R x={531} y={354} X={637} Y={386} f={RED} />
      <L x={817} y={377} s={6.8} a="end" b>-12.9</L><ellipse cx={824} cy={374} rx={4} ry={5} fill="#222" />
      <L x={1006} y={377} s={7} a="end" b>-122.6</L><R x={1011} y={354} X={1124} Y={386} f={RED} />
      <L x={1288} y={377} s={6.8} a="end" b>-18.0</L><ellipse cx={1297} cy={374} rx={4} ry={5} fill="#222" />
      <clipPath id="buRows"><rect x={84} y={398} width={1366} height={252} /></clipPath>
      <g clipPath="url(#buRows)">
        {names.map((n, i) => {
          const y = 420 + i * 37.6;
          const acx = [331, 322, 419, 306, 310, 322, 296][i];
          return (
            <g key={n}>
              <L x={111} y={y + 5} s={6.9} w={[74, 119, 116, 103, 116, 66, 104][i]}>{n}</L>
              <R x={Math.min(304, acx)} y={y - 12} X={Math.max(304, acx)} Y={y + 13} f="#242424" />
              {i === 1 && <><R x={304} y={y - 12} X={342} Y={y} f={RED} /><H x={345} y={y - 14} X={345} Y={y - 2} c={GREEN} /></>}
              {i === 2 && <L x={361} y={y + 6} s={6.8} a="middle" b c="#fff">372.6</L>}
              {(i === 4 || i === 5) && <R x={308} y={y - 12} X={acx} Y={y} f={GREEN} />}
              <L x={i === 6 ? 292 : [336, 348, 426, 311, 315, 326][i]} y={y + 6} s={6.8} a={i === 6 ? 'end' : 'start'}>{sign(pl[i])}</L>
              <R x={Math.min(637, plx[i])} y={y - 14} X={Math.max(637, plx[i])} Y={y + 13} f={pl[i] > 0 ? GREEN : RED} />
              <L x={plx[i] + (pl[i] > 0 ? 5 : -4)} y={y + 6} s={6.8} a={pl[i] > 0 ? 'start' : 'end'}>{sign(pl[i])}</L>
              <R x={Math.min(1124, fcx[i])} y={y - 14} X={Math.max(1124, fcx[i])} Y={y + 13} f={fc[i] > 0 ? GREEN : RED} />
              <L x={fcx[i] + (fc[i] > 0 ? 5 : -4)} y={y + 6} s={6.8} a={fc[i] > 0 ? 'start' : 'end'}>{sign(fc[i])}</L>
              {lolli(828, p1[i], y)}
              {lolli(1301, p2[i], y)}
            </g>
          );
        })}
      </g>
      <H x={304} y={398} X={304} Y={650} c="#555" /><H x={637} y={348} X={637} Y={650} c="#555" />
      <H x={828} y={348} X={828} Y={650} c="#555" /><H x={1124} y={348} X={1124} Y={650} c="#555" d="5 2" />
      <H x={1301} y={348} X={1301} Y={650} c="#555" d="5 2" />
      <R x={84} y={672} X={1450} Y={1218} st="#e4e4e4" sw={1.8} />
      <L x={92} y={700} s={6.6} w={254} c="#444">Actual (AC), Plan (PL), Forecast (FC) by Month</L>
      <R x={97} y={733} X={757} Y={1191} st="#bdbdbd" sw={1.2} />
      <P pts={[1424, 733, 768, 733, 768, 1191, 1424, 1191]} c="#bdbdbd" sw={1.2} />
      <H x={1433} y={736} X={1433} Y={797} c="#c4c4c4" sw={4.5} />
      {([[426, 'AxleCraft Industries', '372.6', '↓', '-0.7%', '-6.7%', RED, 135], [1096, 'Metal Nexus', '87.1', '↑', '+12.4%', '+5.2%', GREEN, 86]] as const).map(([x, n, v, ar, a, b, c, w]) => (
        <g key={n}>
          <L x={x} y={761} s={7.8} w={w} a="middle" c="#444">{n}</L>
          <L x={x} y={792} s={9.6} a="middle" b c="#222">{v}</L>
          {[a, b].map((t, i) => (
            <g key={i}>
              <L x={x - 53} y={818 + i * 26} s={7.4} b c={c}>{ar}</L>
              <L x={x - 32} y={818 + i * 26} s={7} c="#555">{i ? 'ΔFC' : 'ΔPL'}</L>
              <L x={x + 57} y={818 + i * 26} s={6.8} a="end" c={c}>{t}</L>
            </g>
          ))}
        </g>
      ))}
      {([[139, 948, 'ΔPL'], [139, 976, 'FC'], [139, 1044, 'AC'], [809, 915, 'FC'], [809, 964, 'ΔPL'], [809, 1031, 'AC']] as const).map(([x, y, t]) => <L key={y} x={x} y={y} s={6.4} a="end" b c="#444">{t}</L>)}
      <MonthBars x0={165} total={[526, 905, '372.6']} bars={[['Sep', 915, 967, 1], ['Jul', 921, 953, 1], ['May', 930, 1035, 1], ['Oct', 936, 950, 1], ['Feb', 952, 968, 1], ['Mar', 973, 1049, 1], ['Jun', 924, 985, 0], ['Jan', 952, 1004, 0], ['Apr', 984, 1014, 0], ['Nov', 982, 1021, 0], ['Aug', 949, 1026, 0], ['Dec', 997, 1049, 0]]} />
      <MonthBars x0={836} total={[525, 888, '87.1']} bars={[['Mar', 888, 1018, 1], ['Sep', 906, 1072, 1], ['Oct', 953, 1042, 1], ['Dec', 921, 975, 0], ['Jun', 988, 1075, 1], ['Jan', 991, 1080, 1], ['May', 1002, 1024, 0], ['Nov', 982, 1047, 0], ['Apr', 963, 1082, 0], ['Feb', 1088, 1107, 0], ['Aug', 1101, 1147, 0], ['Jul', 1085, 1155, 0]]} />
      <R x={1361} y={888} X={1386} Y={918} f={GREEN} />
      <H x={691} y={905} X={715} c={RED} sw={1.4} />
      {([[179, 1042, '41.7', '#fff'], [618, 1110, '18.8', '#fff'], [849, 1029, '14.4', '#fff'], [256, 922, '+17.8', '#222'], [574, 941, '-13.2', '#222'], [702, 895, '+2.8', '#222'], [886, 899, '+8.8', '#222'], [1165, 955, '-6.3', '#222'], [1373, 880, '+9.6', '#222']] as const).map(([x, y, t, c]) => (
        <L key={x} x={x} y={y} s={5.6} a="middle" b c={c}>{t}</L>
      ))}
    </Plate>
  );
}

/* ---------- Monthly summary dashboard ---------- */

type Region = { name: string; rows: string[][] };
const regions: Region[] = [
  { name: 'Australia', rows: [
    ['All', '2 332.5', '2 381.2', '2 426.5', '+94.0', '+4.0', '+45.3'],
    ['Jan', '140.6', '152.5', '186.2', '+45.6', '+32.4', '+33.7'],
    ['Feb', '113.5', '130.7', '228.9', '+115.4', '+101.7', '+98.2'],
    ['Mar', '160.8', '154.2', '196.4', '+35.6', '+22.1', '+42.2'],
    ['Apr', '193.0', '202.6', '181.3', '-11.8', '-6.1', '-21.3'],
    ['May', '185.3', '181.4', '237.6', '+52.3', '+28.2', '+56.3'],
    ['Jun', '223.2', '213.1', '210.5', '-12.7', '-5.7', '-2.6'],
    ['Jul', '218.1', '232.4', '206.0', '-12.1', '-5.5', '-26.4'],
    ['Aug', '245.6', '256.7', '179.4', '-66.2', '-27.0', '-77.3'],
    ['Sep', '203.8', '226.3', '223.8', '+19.9', '+9.8', '-2.6'],
    ['Oct', '182.8', '180.4', '234.4', '+51.7', '+28.3', '+54.1'],
    ['Nov', '239.0', '243.5', '168.7', '-70.3', '-29.4', '-74.8'],
    ['Dec', '226.7', '207.4', '173.3', '-53.4', '-23.6', '-34.1']] },
  { name: 'Asia', rows: [
    ['All', '1 494.1', '1 579.0', '1 250.8', '-243.2', '-16.3', '-328.2'],
    ['Jan', '141.0', '155.9', '95.3', '-45.7', '-32.4', '-60.6'],
    ['Feb', '109.0', '111.5', '98.4', '-10.6', '-9.8', '-13.1'],
    ['Mar', '138.0', '149.0', '129.5', '-8.5', '-6.1', '-19.5'],
    ['Apr', '124.0', '120.8', '51.9', '-72.1', '-58.1', '-68.9'],
    ['May', '129.7', '140.5', '101.5', '-28.2', '-21.7', '-39.0'],
    ['Jun', '123.9', '128.9', '93.0', '-30.8', '-24.9', '-35.9'],
    ['Jul', '136.1', '144.4', '80.8', '-55.4', '-40.7', '-63.6'],
    ['Aug', '122.1', '128.4', '62.8', '-59.3', '-48.6', '-65.6'],
    ['Sep', '129.9', '135.7', '124.3', '-5.5', '-4.3', '-11.4'],
    ['Oct', '130.3', '141.8', '127.2', '-3.1', '-2.4', '-14.6'],
    ['Nov', '106.3', '115.0', '116.3', '+10.0', '+9.4', '+1.3'],
    ['Dec', '103.8', '107.1', '169.7', '+65.9', '+63.5', '+62.6']] },
  { name: 'Middle East', rows: [
    ['All', '444.5', '439.7', '471.8', '+27.2', '+6.1', '+32.1'],
    ['Jan', '28.3', '30.6', '46.2', '+17.9', '+63.3', '+15.6'],
    ['Feb', '47.3', '49.2', '42.2', '-5.1', '-10.8', '-7.0'],
    ['Mar', '37.9', '40.4', '52.5', '+14.6', '+38.5', '+12.2'],
    ['Apr', '31.0', '30.8', '40.1', '+9.0', '+29.2', '+9.1']] },
  { name: 'Europe', rows: [
    ['All', '252.6', '261.3', '366.1', '+113.4', '+44.9', '+104.8'],
    ['Jan', '19.4', '19.4', '40.2', '+20.8', '+107.2', '+20.8'],
    ['Feb', '20.4', '20.4', '17.5', '-2.9', '-14.2', '-2.9'],
    ['Mar', '21.7', '21.5', '45.1', '+23.3', '+107.5', '+23.6'],
    ['Apr', '21.0', '21.8', '24.1', '+3.1', '+4.1', '+2.3']] },
];

function RegionTable({ x, y, r }: { x: number; y: number; r: Region }) {
  const ends = [183, 254, 332, 410, 488, 559];
  const heads = ['PL', 'FC', 'AC', 'ΔPL', 'ΔPL%', 'ΔFC'];
  const rules = [[119, 186, '#bbb', 2.2], [191, 258, '#8a8a8a', 2.2], [267, 336, '#333', 2.8], [346, 413, '#777', 1.6], [424, 492, '#777', 1.6], [502, 559, '#777', 1.6]] as const;
  return (
    <g transform={`translate(${x} ${y})`}>
      <L x={273} y={22} s={5.2} a="middle" c="#555">{r.name}</L>
      {heads.map((h, i) => <L key={h} x={ends[i] - 1} y={62} s={6.2} a="end" c="#555">{h}</L>)}
      {[81, 127].map((ly) => (
        <g key={ly}>
          <H x={0} y={ly} X={115} c="#777" sw={1.6} />
          {rules.map(([a, b, c, sw]) => <H key={a} x={a} y={ly} X={b} c={c} sw={sw} />)}
        </g>
      ))}
      {r.rows.map((row, i) => {
        const ry = i ? 153 + (i - 1) * 33.9 : 114;
        return (
          <g key={row[0]}>
            <L x={4} y={ry} s={5.8} b={!i}>{row[0]}</L>
            {ends.map((e, k) => (
              <L key={e} x={e} y={ry} s={5.7} a="end" b={!i} c={k === 4 && i ? (row[5][0] === '-' ? '#f0303c' : '#92bb2c') : '#3a3a3a'}>{row[k + 1]}</L>
            ))}
          </g>
        );
      })}
    </g>
  );
}

function MonthlyPlate() {
  return (
    <Plate box={[39.2, 300, 1481.3, 1215]}>
      <H x={140} y={300} X={140} Y={1483} c="#ececec" />
      <H x={47} y={1497} X={1512} c="#e6e6e6" sw={1.2} />
      <R x={199} y={440} X={207} Y={452} f="#e2231a" /><R x={199} y={424} X={207} Y={436} f="#c9c9b5" /><R x={199} y={408} X={207} Y={420} f="#ddd" />
      <R x={210} y={425} X={219} Y={452} f="#f5a100" /><R x={210} y={408} X={219} Y={420} f="#ddd" />
      <R x={222} y={407} X={230} Y={452} f="#4db848" />
      <L x={234} y={424} s={9.2} w={45} c="#444" f="'Liberation Mono', monospace">info</L>
      <L x={234} y={447} s={9.2} w={45} c="#444" f="'Liberation Mono', monospace">river</L>
      <H x={199} y={462} X={280} c="#ccc" />
      <L x={199} y={473} s={3.2} w={80} c="#aaa">INTELLIGENT ANALYTICS</L>
      <L x={297} y={432} s={8.2} w={442}>FINANCIAL PERFORMANCE - MONTHLY SUMMARY BY REGION</L>
      <L x={1216} y={444} s={7.2} w={30}>Year</L>
      <R x={1266} y={419} X={1384} Y={460} f="#fff" st="#bfbfbf" />
      <L x={1271} y={445} s={5.2} c="#777">2022</L>
      <path d="M1362 431h11l-4 7v7l-3 -2v-5z" fill="none" stroke="#777" strokeWidth={0.9} />
      <R x={190} y={497} X={1391} Y={1390} st="#e2e2e2" sw={1.6} />
      <L x={195} y={525} s={6.4} w={245} c="#444">Actual (AC), Plan (PL), Forecast (FC) by Month</L>
      {[201, 803].map((x) => (
        <g key={x}>
          <R x={x} y={550} X={x + (x > 500 ? 566 : 582)} Y={1104} st="#ececec" sw={1.4} />
          <P pts={[x, 1376, x, 1131, x + (x > 500 ? 566 : 582), 1131, x + (x > 500 ? 566 : 582), 1376]} c="#ececec" sw={1.4} />
          <H x={x + 139} y={1092} X={x + 493} c="#b8b8b8" sw={3} />
        </g>
      ))}
      <clipPath id="msClip"><rect x={190} y={540} width={1178} height={836} /></clipPath>
      <g clipPath="url(#msClip)">
        <RegionTable x={219} y={550} r={regions[0]} />
        <RegionTable x={822} y={550} r={regions[1]} />
        <RegionTable x={219} y={1130} r={regions[2]} />
        <RegionTable x={822} y={1130} r={regions[3]} />
      </g>
      <H x={1376} y={550} X={1376} Y={834} c="#b8b8b8" sw={3} />
    </Plate>
  );
}

/* ---------- Welcome dashboard ---------- */

function WelcomePlate() {
  const K = '#1b1b1b';
  return (
    <Plate box={[29.5, 300, 1462, 1215]}>
      <defs>
        <linearGradient id="wOrange" x1="0" y1="0" x2="0" y2="1"><stop offset="0.35" stopColor="#ff7f0e" /><stop offset="1" stopColor="#ff7f0e" stopOpacity="0" /></linearGradient>
        <linearGradient id="wBlue" x1="0" y1="0" x2="0" y2="1"><stop offset="0.1" stopColor="#1f77b4" /><stop offset="1" stopColor="#1f77b4" stopOpacity="0.05" /></linearGradient>
      </defs>
      <R x={88} y={359} X={162} Y={1446} f={K} rx={16} ry={24} />
      {[540, 628, 715, 802].map((y) => <ellipse key={y} cx={125} cy={y} rx={24} ry={35} fill="#222" />)}
      <ellipse cx={125} cy={453} rx={24} ry={35} fill={K} stroke="#fff" strokeWidth={1} />
      <path d="M115 455L125 440L135 455M118 452V467H132V452M123 467V458H127V467" fill="none" stroke="#fff" strokeWidth={1.1} />
      <R x={116} y={525} X={134} Y={554} st="#fff" sw={1.3} rx={2} />
      <path d="M121 548v-10M125 548v-16M129 548v-6" stroke="#fff" strokeWidth={1.4} />
      {[119.5, 130.5].flatMap((x) => [620, 637].map((y) => <ellipse key={`${x}${y}`} cx={x} cy={y} rx={4.6} ry={6.6} fill="#fff" />))}
      <path d="M117 724v-12M125 716v-14M133 721v-12" stroke="#fff" strokeWidth={1.8} />
      <ellipse cx={125} cy={802} rx={7.5} ry={11} fill="none" stroke="#fff" strokeWidth={2.6} />
      {[0, 60, 120].map((a) => {
        const t = (a * Math.PI) / 180;
        const dx = 12 * Math.sin(t);
        const dy = 18 * Math.cos(t);
        return (
          <g key={a}>
            <H x={125 - dx} y={802 - dy} X={125 - dx * 0.7} Y={802 - dy * 0.7} c="#fff" sw={3} />
            <H x={125 + dx * 0.7} y={802 + dy * 0.7} X={125 + dx} Y={802 + dy} c="#fff" sw={3} />
          </g>
        );
      })}
      <R x={197} y={361} X={443} Y={432} f="#f6f6f6" rx={4} />
      <path d="M218 380h23v5l-8 11v18l-5 -5v-13l-10 -11z" fill="#111" />
      <R x={265} y={376} X={429} Y={416} f="#fff" st="#bbb" />
      <L x={273} y={402} s={6.4} c="#777">All</L>
      <P pts={[410, 390, 415, 397, 420, 390]} c="#333" sw={1.6} />
      <L x={202} y={508} s={12.4} w={213} b c="#333">WELCOME BACK !</L>
      {([[197, 'COGS', '101.8m'], [402, 'Sales', '118.7m'], [616, 'Gross Sales', '127.9m'], [827, 'Discounts', '9.2m']] as const).map(([x, n, v], i) => (
        <g key={n}>
          <R x={x} y={578} X={x + 186} Y={825} f={i === 1 ? K : '#f6f6f6'} rx={20} ry={30} />
          {i !== 1 && <path d={`M${x + 17} 580Q${x + 2} 590 ${x + 2} 612V792Q${x + 2} 814 ${x + 17} 824`} fill="none" stroke="#222" strokeWidth={1.6} />}
          {i === 1 && <path d={`M${x + 8} 598V808`} stroke="#fff" strokeWidth={1.2} />}
          <L x={x + 26} y={671} s={8} w={[46, 38, 83, 66][i]} c={i === 1 ? '#fff' : '#444'}>{n}</L>
          <L x={x + (i === 1 ? 34 : 28)} y={i === 1 ? 762 : 767} s={16.4} w={[109, 115, 108, 73][i]} b c={i === 1 ? '#fff' : '#333'}>{v}</L>
        </g>
      ))}
      <R x={197} y={874} X={1012} Y={1440} f="#f6f6f6" rx={20} ry={30} />
      <L x={224} y={935} s={11} w={171} b c="#333">Total Impression</L>
      <L x={236} y={1267} s={7.8} r={-90}>COGS, Sales and Δ1</L>
      {([['115m', 1070], ['110m', 1149], ['105m', 1229], ['100m', 1280], ['0', 1319]] as const).map(([t, y]) => <L key={t} x={276} y={y} s={6.4} a="end" c="#555">{t}</L>)}
      <R x={298} y={1004} X={372} Y={1310} f="url(#wOrange)" />
      <R x={897} y={1272} X={970} Y={1310} f="url(#wBlue)" />
      {([[429, 1004, 1052], [516, 1052, 1108], [604, 1108, 1168], [691, 1168, 1227], [779, 1227, 1273]] as const).map(([x, y, Y]) => (
        <g key={x}><R x={x} y={y} X={x + 62} Y={Y} f={K} /><H x={x + 62} y={Y} X={x + 88} c="#aaa" /></g>
      ))}
      <H x={298} y={1005} X={429} c="#999" /><H x={841} y={1273} X={970} c="#999" />
      <L x={336} y={995} s={5.8} a="middle" b>118.7m</L>
      <L x={635} y={1190} s={5.6} a="middle" b>-3.8m</L>
      <L x={810} y={1295} s={5.6} a="middle" b>-2.9m</L>
      <L x={934} y={1264} s={5.8} a="middle" b>101.8m</L>
      {([[335, 'PY', true], [543, 'Canada', false], [631, 'France', false], [719, 'Germany', false], [806, 'Mexico', false], [933, 'AC', true]] as const).map(([x, t, b]) => <L key={t} x={x} y={1334} s={6} a="middle" b={b} c="#444">{t}</L>)}
      <L x={419} y={1334} s={6} c="#444">United States</L><L x={419} y={1359} s={6} c="#444">of America</L>
      <L x={635} y={1394} s={7} a="middle" b c="#444">Country</L>
      <R x={1037} y={477} X={1422} Y={1443} f="#f6f6f6" rx={16} ry={24} />
      <L x={1272} y={534} s={7.2} w={111} a="middle" b c="#444">COGS and Sales</L>
      {([[1152, '0'], [1198, '5m'], [1247, '10m'], [1297, '15m'], [1347, '20m'], [1385, '25m']] as const).map(([x, t]) => <L key={t} x={x} y={555} s={6} a="middle" c="#555">{t}</L>)}
      {([['United St...', 1367, 1397], ['Canada', 1360, 1396], ['France', 1352, 1391], ['Germany', 1346, 1383], ['Mexico', 1328, 1356]] as const).map(([t, a, b], i) => {
        const y = 584 + i * 50;
        return (
          <g key={t}>
            <R x={1149} y={y} X={b} Y={y + 36} f="#ff7f0e" />
            <R x={1149} y={y + 4} X={a} Y={y + 41} f={K} />
            <L x={1142} y={y + 28} s={6.2} a="end" c="#555">{t}</L>
          </g>
        );
      })}
      <H x={1149} y={576} X={1149} Y={838} c="#666" />
      <H x={1350} y={576} X={1350} Y={834} c="#888" d="7 3" />
      <L x={1346} y={613} s={5.8} a="middle" b c="#fff">22.0m</L>
      <L x={1307} y={813} s={5.8} a="middle" b c="#fff">18.0m</L>
      <R x={1331} y={710} X={1353} Y={728} f="#8888" />
      <L x={1333} y={725} s={6} w={55} c="#8f3a2e">A : 20.4m</L>
      <L x={1069} y={747} s={7.4} r={-90}>Country</L>
      <L x={1152} y={949} s={7.4} a="middle" c="#444">COGS</L>
      <L x={1152} y={980} s={9.4} w={66} a="middle" b c="#333">101.8m</L>
      {([['100m', 914], ['50m', 957], ['0', 997]] as const).map(([t, y]) => <L key={t} x={1266} y={y} s={4.6} a="end" c="#666">{t}</L>)}
      {([[1279, 976], [1297, 959], [1315, 940], [1334, 922]] as const).map(([x, y]) => <R key={x} x={x} y={y} X={x + 14} Y={y + 20} f={K} />)}
      <R x={1372} y={906} X={1388} Y={995} f="#e8e8e8" />
      <H x={1275} y={997} X={1352} c="#666" /><H x={1369} y={997} X={1390} c="#666" />
      <H x={1275} y={1011} X={1337} c="#b8b8b8" sw={3} />
      <L x={1370} y={899} s={4.8} a="middle" b>101.8m</L>
      <L x={1336} y={914} s={4.4} a="middle" b>18.0m</L>
      <L x={1286} y={969} s={4.4} a="middle" b>22.0m</L>
      {([['30m', 1107], ['20m', 1177], ['10m', 1247], ['0', 1316]] as const).map(([t, y]) => <L key={t} x={1109} y={y} s={6.4} a="end" c="#555">{t}</L>)}
      <L x={1075} y={1299} s={7.6} r={-90}>COGS, Sales, Di...</L>
      <P pts={[1138, 1136, 1220, 1137, 1318, 1145, 1376, 1163, 1376, 1310, 1138, 1310]} f="#f7e5d6" />
      <P pts={[1138, 1155, 1220, 1162, 1318, 1171, 1376, 1184, 1376, 1310, 1138, 1310]} f="#d3d2cc" />
      <P pts={[1138, 1119, 1200, 1121, 1260, 1127, 1318, 1136, 1376, 1151]} c="#333" sw={1.8} d="6 4" />
      <P pts={[1138, 1136, 1220, 1137, 1270, 1140, 1318, 1145, 1376, 1163]} c="#f59443" sw={1.5} />
      <P pts={[1138, 1155, 1220, 1162, 1318, 1171, 1376, 1184]} c="#222" sw={1.8} />
      <P pts={[1138, 1295, 1376, 1299]} c="#999" d="5 4" />
      <H x={1112} y={1310} X={1405} c="#888" />
      <ellipse cx={1376} cy={1184} rx={4} ry={6} fill="#1f77d0" />
      <L x={1138} y={1143} s={6} a="middle" c="#222">22.0m</L>
      <L x={1376} y={1208} s={6} a="middle" c="#222">18.0m</L>
      {([[1138, 'United'], [1197, 'Canada'], [1257, 'France'], [1316, 'Germany'], [1375, 'Mexico']] as const).map(([x, t]) => <L key={t} x={x} y={1331} s={6} a="middle" c="#555">{t}</L>)}
      <L x={1138} y={1356} s={6} a="middle" c="#555">States...</L>
      <L x={1257} y={1391} s={7} a="middle" b c="#444">Country</L>
    </Plate>
  );
}

/* ---------- icons ---------- */

const AppBadge = () => (
  <Badge>
    <svg width="33" height="33" viewBox="0 0 33 33" fill="#fff">
      <rect x="12.4" y="19.8" width="3.8" height="6.2" />
      <rect x="17.4" y="13.8" width="3.8" height="12.2" />
      <rect x="22.4" y="7.4" width="3.8" height="18.6" />
      <circle cx="11" cy="13.4" r="4.9" />
      <path d="M11.2 9V13.6L14 16.6" stroke="#dc2626" strokeWidth="0.7" fill="none" />
    </svg>
  </Badge>
);

const Crown = () => (
  <svg width="14" height="13" viewBox="0 0 14 13">
    <path d="M0.5 3.9L3.8 6.8L5.2 5.6L6.6 1H7.4L8.8 5.6L10.2 6.8L13.5 3.9L12 12.2H2Z" fill="#fbbf10" />
    <circle cx="7" cy="1.5" r="1.2" fill="#fbbf10" />
    <circle cx="1.1" cy="4.4" r="1" fill="#fbbf10" />
    <circle cx="12.9" cy="4.4" r="1" fill="#fbbf10" />
  </svg>
);

const Star = () => (
  <svg width="19" height="18" viewBox="0 0 19 18">
    <path d="M9.5 0.8L12.1 6.1L18 6.9L13.7 11L14.8 16.9L9.5 14.1L4.2 16.9L5.3 11L1 6.9L6.9 6.1Z" fill="#facc15" stroke="#facc15" strokeWidth="1" strokeLinejoin="round" />
  </svg>
);

const Chevron = () => (
  <svg width="14" height="20" viewBox="0 0 14 20">
    <path d="M3.4 0.9L11 9L3.4 17.1" fill="none" stroke="#3b82f6" strokeWidth="2.1" strokeLinecap="round" strokeLinejoin="round" />
  </svg>
);

const SearchIcon = () => (
  <svg width="28" height="28" viewBox="0 0 28 28">
    <defs>
      <linearGradient id="glass" x1="0" y1="0" x2="1" y2="0">
        <stop offset="0" stopColor="#56d04e" />
        <stop offset="1" stopColor="#ffb300" />
      </linearGradient>
    </defs>
    <path d="M23.2 17.5A11 11 0 1 0 18.6 22.3M19.6 21L25.6 26" fill="none" stroke="url(#glass)" strokeWidth="2" strokeLinecap="round" />
  </svg>
);

function BrandLogo() {
  return (
    <Logo viewBox="24 16 156 40">
      <text x="23.4" y="45.2" fontFamily="Lato, sans-serif" fontSize="31" fill="#333" textLength="119" lengthAdjust="spacing">Analytic</text>
      <path d="M151.5 27.2C155 27.2 157 29.8 157 33.2H152.4V37H150C146.6 37 145 34.6 145 32.2C145 29.4 147.6 27.2 151.5 27.2Z" fill="#333" />
      <path d="M153.4 34.2C156.6 34.4 158.4 37.6 158.4 41C158.4 44.8 155.4 47.8 151.6 47.8C148 47.8 146 45.6 145.6 41.6H151.4V38.4H153.4Z" fill="#333" />
      <path d="M169.7 26.8V41.4M162.8 34H176.8" stroke="#333" strokeWidth="2.1" fill="none" strokeLinecap="round" />
    </Logo>
  );
}

/* ---------- cards ---------- */

type CardInfo = { preview: React.ReactNode; pro?: boolean; title?: string; rating?: string };

const Card = ({ preview, pro, title, rating }: CardInfo) => (
  <CardBox>
    <Thumb>
      {preview}
      <AppBadge />
      {pro && <ProPill><Crown />Pro</ProPill>}
    </Thumb>
    {title && (
      <Meta>
        <div>
          <CardTitle>{title}</CardTitle>
          <Author>by Lumel</Author>
        </div>
        <Rating><Star />{rating}</Rating>
      </Meta>
    )}
  </CardBox>
);

const lumelCards: CardInfo[] = [
  { preview: <SeoPlate />, pro: true, title: 'SEO Dashboard', rating: '3.3' },
  { preview: <ModernPlate />, pro: true, title: 'Modern Dashboard', rating: '4.9' },
  { preview: <PortfolioPlate />, title: 'Portfolio Slicer Dashboard', rating: '4.4' },
  { preview: <BusinessPlate />, title: 'Business Units by Accounts', rating: '3.9' },
];

const proCards: CardInfo[] = [
  { preview: <SeoPlate />, pro: true },
  { preview: <ModernPlate />, pro: true },
  { preview: <MonthlyPlate />, pro: true },
  { preview: <WelcomePlate />, pro: true },
];

const chips: [string, number][] = [
  ['Ibcs', 61], ['Kpi', 56], ['Financial', 94], ['Slicer', 71], ['Pie Chart', 98], ['Shapes', 83], ['Modern', 90], ['Buttons', 88],
];

function Shelf({ top, title, sub, cards }: { top: number; title: string; sub: string; cards: CardInfo[] }) {
  return (
    <Section $top={top}>
      <SectionHead>
        <Titles>
          <SectionTitle>{title}</SectionTitle>
          <SectionSub>{sub}</SectionSub>
        </Titles>
        <Explore>Explore more <Chevron /></Explore>
      </SectionHead>
      <Grid>{cards.map((c, i) => <Card key={i} {...c} />)}</Grid>
    </Section>
  );
}

export default function App() {
  return (
    <>
      <GlobalStyle />
      <Page>
        <Header>
          <BrandLogo />
          <Nav>
            <NavLink $w={205}>Dashboard Templates</NavLink>
            <NavLink $w={184}>Visual Components</NavLink>
          </Nav>
          <LoginButton>Login</LoginButton>
        </Header>
        <Scroll>
          <Hero>
            <Headline>
              <HeadRow>
                <HeadText $w={619}>Empower Your Business with</HeadText>
                <Strong>Ready-to-Use</Strong>
              </HeadRow>
              <HeadRow>
                <HeadText $w={242} $drop={6} $ls={1}>Analytics+</HeadText>
                <Rotator>
                  <RotatingWord>Dashboards!</RotatingWord>
                  <RotatingWord $faded>Bundles!</RotatingWord>
                </Rotator>
              </HeadRow>
            </Headline>
            <SearchBox>
              <SearchField>
                <SearchIcon />
                <SearchInput placeholder="Search dashboards, bundles and components..." />
              </SearchField>
            </SearchBox>
            <Chips>
              {chips.map(([t, w]) => <Chip key={t} $w={w}>{t}</Chip>)}
            </Chips>
          </Hero>
          <Shelf top={142} title="Dashboards by Lumel" sub="Discover expertly crafted dashboards by Lumel – designed to elevate your data storytelling to a premium level." cards={lumelCards} />
          <Shelf top={67} title="Pro Dashboards" sub="Discover expertly crafted dashboards designed by professionals, elevating your data storytelling to a premium level." cards={proCards} />
        </Scroll>
      </Page>
    </>
  );
}
